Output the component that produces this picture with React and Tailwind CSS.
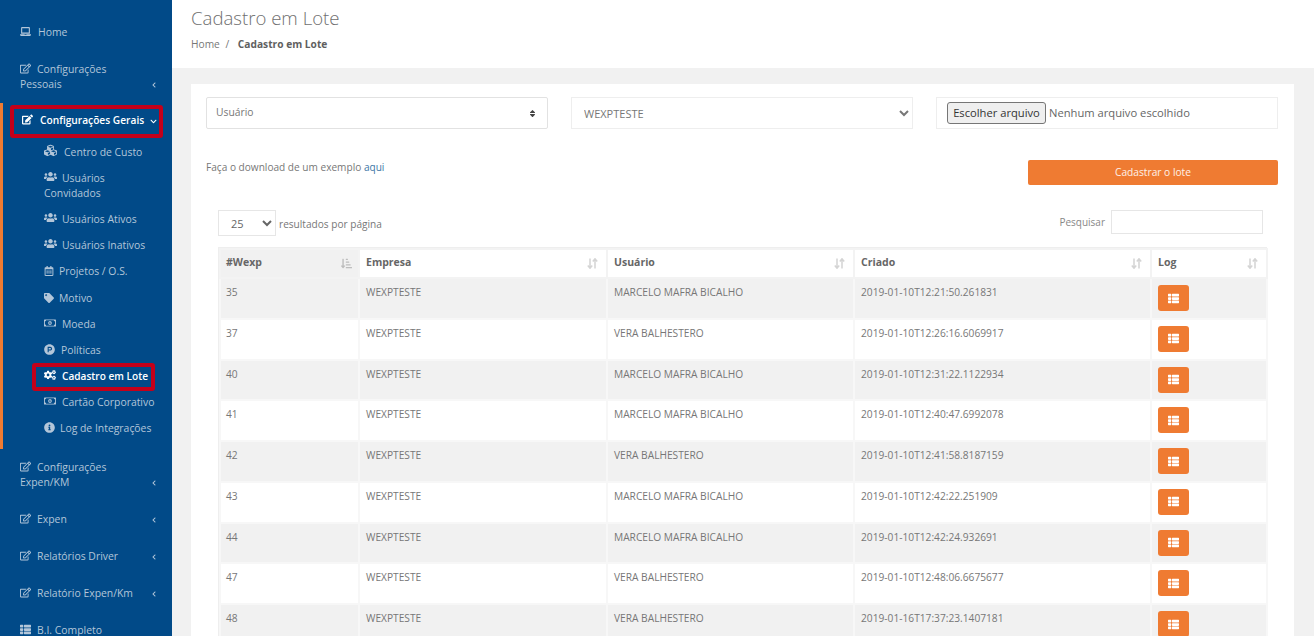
import React from 'react';
import { FaLaptop, FaRegEdit, FaEdit, FaCubes, FaUsers, FaTag, FaRegMoneyBillAlt, FaProductHunt, FaCogs, FaInfoCircle, FaThList, FaRegCalendarAlt, FaChevronLeft, FaChevronDown, FaSortAmountDownAlt, FaSort } from 'react-icons/fa';

function Sub({ icon: I, label, wrap, active, gap = 'mr-[6px]', size = 11 }) {
  return (
    <div className={`relative pl-[44px] pr-2 py-[5.6px] leading-[15px] ${active ? 'text-white font-semibold text-[10.1px]' : ''}`}>
      {active && <span className="absolute left-[32px] right-[17px] top-[-1px] bottom-[-1px] border-[4px] border-[#c4001a] rounded-[3px]" />}
      <I className={`inline-block align-[-1px] -mt-[4px] ${gap}`} size={size} />
      {label}
      {wrap && <><br />{wrap}</>}
    </div>
  );
}

function Top({ icon: I = FaRegEdit, label, wrap, chevron = true, gap = 'mr-[6px]' }) {
  return (
    <div className="relative pl-[20px] pr-[15px] py-[11px] leading-[15px]">
      <I className={`inline-block align-[-1px] -mt-[4px] ${gap}`} size={11} />
      {label}
      {wrap && <><br />{wrap}</>}
      {chevron && <FaChevronLeft className="absolute right-[15px] bottom-[15px]" size={6} />}
    </div>
  );
}

function Sidebar() {
  return (
    <aside className="w-[172px] shrink-0 bg-[#014a88] text-[#b3c6d9] text-[10.4px] font-medium pt-[14px] h-[636px] overflow-hidden">
      <Top icon={FaLaptop} label="Home" chevron={false} gap="mr-[7px]" />
      <Top label="Configurações" wrap="Pessoais" />
      <div className="border-l-[3px] border-[#ef7b32] pb-[7.4px]">
        <div className="relative pl-[19px] pr-[15px] pt-[10px] pb-[11px] leading-[15px] text-white font-semibold text-[10.2px]">
          <span className="absolute left-[7px] right-[9px] top-[2px] bottom-[1px] border-[4px] border-[#c4001a] rounded-[3px]" />
          <FaEdit className="inline-block align-[-1px] -mt-[4px] mr-[7px]" size={11} />
          Configurações Gerais
          <FaChevronDown className="absolute right-[15px] top-[15px]" size={7} />
        </div>
        <div className="-ml-[3px]">
          <Sub icon={FaCubes} label="Centro de Custo" gap="mr-[7px]" size={13} />
          <Sub icon={FaUsers} label="Usuários" wrap="Convidados" size={13} gap="mr-[5px]" />
          <Sub icon={FaUsers} label="Usuários Ativos" size={13} gap="mr-[5px]" />
          <Sub icon={FaUsers} label="Usuários Inativos" size={13} gap="mr-[5px]" />
          <Sub icon={FaRegCalendarAlt} label="Projetos / O.S." size={10} gap="mr-[5px]" />
          <Sub icon={FaTag} label="Motivo" size={10} gap="mr-[5px]" />
          <Sub icon={FaRegMoneyBillAlt} label="Moeda" size={12} />
          <Sub icon={FaProductHunt} label="Políticas" size={11} />
          <Sub icon={FaCogs} label="Cadastro em Lote" active size={12} />
          <Sub icon={FaRegMoneyBillAlt} label="Cartão Corporativo" size={12} />
          <Sub icon={FaInfoCircle} label="Log de Integrações" size={11} gap="mr-[5px]" />
        </div>
      </div>
      <Top label="Configurações" wrap="Expen/KM" />
      <Top label="Expen" />
      <Top label="Relatórios Driver" />
      <Top label="Relatório Expen/Km" />
      <Top icon={FaThList} label="B.I. Completo" chevron={false} />
    </aside>
  );
}

const rows = [
  ['35', 'MARCELO MAFRA BICALHO', '2019-01-10T12:21:50.261831'],
  ['37', 'VERA BALHESTERO', '2019-01-10T12:26:16.6069917'],
  ['40', 'MARCELO MAFRA BICALHO', '2019-01-10T12:31:22.1122934'],
  ['41', 'MARCELO MAFRA BICALHO', '2019-01-10T12:40:47.6992078'],
  ['42', 'VERA BALHESTERO', '2019-01-10T12:41:58.8187159'],
  ['43', 'MARCELO MAFRA BICALHO', '2019-01-10T12:42:22.251909'],
  ['44', 'MARCELO MAFRA BICALHO', '2019-01-10T12:42:24.932691'],
  ['47', 'VERA BALHESTERO', '2019-01-10T12:48:06.6675677'],
  ['48', 'VERA BALHESTERO', '2019-01-16T17:37:23.1407181'],
];

function SortIcon() {
  return (
    <svg width="11" height="11" viewBox="0 0 11 11" className="absolute right-[8px] top-[8px] text-[#d4d4d4]" fill="none" stroke="currentColor" strokeWidth="1.5">
      <path d="M3 0.5V10M0.8 7.5L3 10.2L5.2 7.5" />
      <path d="M8 10.5V1M5.8 3.5L8 0.8L10.2 3.5" />
    </svg>
  );
}

function Th({ children, w, sorted }) {
  return (
    <th className={`relative ${w} border-2 border-[#f3f3f3] ${sorted ? 'pl-[5px]' : 'pl-[6px]'} pr-[6px] pt-0 pb-[2px] h-[29px] text-left font-bold text-[#666] text-[10.5px] ${sorted ? 'bg-[#f1f1f1]' : 'bg-white'}`}>
      {children}
      {sorted ? <FaSortAmountDownAlt className="absolute right-[6px] top-[8px] text-[#bdbdbd]" size={11} /> : <SortIcon />}
    </th>
  );
}

const td = 'border-2 border-[#f7f7f7] pl-[6px] pr-[6px] pt-[6px] align-top leading-[15px]';
const tdFirst = 'border-2 border-[#f7f7f7] pl-[5px] pr-[6px] pt-[6px] align-top leading-[15px]';

function Table() {
  return (
    <div className="ml-[27px] mt-[11px] border border-[#eeeeee] w-[1049px]">
      <table className="w-[1047px] table-fixed border-collapse text-[10.2px] text-[#777]">
        <thead>
          <tr>
            <Th w="w-[139px]" sorted>#Wexp</Th>
            <Th w="w-[248px]">Empresa</Th>
            <Th w="w-[247px]">Usuário</Th>
            <Th w="w-[297px]">Criado</Th>
            <Th w="w-[116px]">Log</Th>
          </tr>
        </thead>
        <tbody>
          {rows.map((r, i) => (
            <tr key={r[0]} className={`h-[40.75px] ${i % 2 === 0 ? 'bg-[#f1f1f1]' : 'bg-white'}`}>
              <td className={tdFirst}>{r[0]}</td>
              <td className={td}>WEXPTESTE</td>
              <td className={td}>{r[1]}</td>
              <td className={td}>{r[2]}</td>
              <td className={td}>
                <button className="flex items-center justify-center w-[31px] h-[26px] rounded-[3px] bg-[#ef7b32] text-white">
                  <FaThList size={11} />
                </button>
              </td>
            </tr>
          ))}
        </tbody>
      </table>
    </div>
  );
}

export default function App() {
  return (
    <div className="flex w-[1314px] h-[636px] overflow-hidden bg-[#f1f1f1] font-['Open_Sans',sans-serif]">
      <Sidebar />
      <main className="flex-1 min-w-0">
        <header className="bg-white h-[68px] pl-[19px] pt-[4px]">
          <h1 className="text-[18.6px] font-light text-[#6f6f6f] leading-[27px]">Cadastro em Lote</h1>
          <div className="mt-[6px] text-[10.2px] leading-[15px] text-[#777]">
            Home <span className="mx-[3px]">/</span> <span className="ml-[3px] font-bold text-[#5f5f5f]">Cadastro em Lote</span>
          </div>
        </header>
        <section className="ml-[19px] mr-[20px] mt-[16px] bg-white h-[600px] pt-[13px]">
          <div className="flex pl-[15px] pr-[16px] gap-[23px]">
            <div className="w-[342px] h-[32px] flex items-center justify-between border border-[#e2e2e2] rounded-[2px] pl-[9px] pr-[10px] text-[10.3px] text-[#777]">
              <span>Usuário</span>
              <FaSort size={9} className="text-[#444]" />
            </div>
            <select defaultValue="WEXPTESTE" className="w-[342px] h-[32px] border border-[#eeeeee] bg-white pl-[8px] pr-[2px] text-[11px] text-[#777]">
              <option>WEXPTESTE</option>
            </select>
            <div className="w-[342px] h-[32px] flex items-center border border-[#eeeeee] pl-[10px] text-[11.2px] text-[#666]">
              <button className="w-[99px] h-[22px] bg-[#efefef] border border-[#767676] rounded-[3px] text-[#333] mr-[3px] leading-none">Escolher arquivo</button>
              <span>Nenhum arquivo escolhido</span>
            </div>
          </div>
          <div className="flex justify-between pl-[15px] pr-[16px] mt-[31px]">
            <p className="text-[10.1px] leading-[15px] text-[#777]">Faça o download de um exemplo <a className="text-[#3c76a5]">aqui</a></p>
            <button className="w-[250px] h-[25px] rounded-[2px] bg-[#ef7b32] text-white/90 text-[10.2px] font-medium">Cadastrar o lote</button>
          </div>
          <div className="flex justify-between items-start pl-[27px] pr-[31px] mt-[25px]">
            <div className="flex items-center text-[10.1px] text-[#777]">
              <select defaultValue="25" className="w-[58px] h-[26px] border border-[#e6e6e6] bg-white pl-[8px] text-[11px] text-[#666]">
                <option>25</option>
              </select>
              <span className="ml-[3px] mt-[4px]">resultados por página</span>
            </div>
            <div className="flex items-center text-[10px] text-[#888]">
              <span className="mr-[6px]">Pesquisar</span>
              <input className="w-[152px] h-[24px] border border-[#e6e6e6] bg-white" />
            </div>
          </div>
          <Table />
        </section>
      </main>
    </div>
  );
}
